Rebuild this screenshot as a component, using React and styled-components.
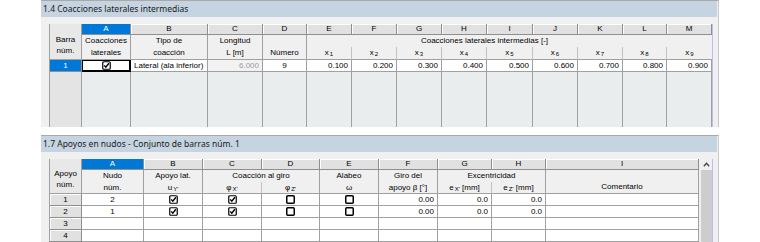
import React from "react";
import styled, { createGlobalStyle } from "styled-components";

const GlobalStyle = createGlobalStyle`
  html, body { margin: 0; padding: 0; background: #fff; }
  body { font-family: "Liberation Sans", Arial, sans-serif; color: #000; }
  * { box-sizing: border-box; }
`;

const Page = styled.div`
  width: 678px;
  margin-left: 41px;
  display: flex;
  flex-direction: column;
  gap: 8px;
`;

const Panel = styled.section`
  height: ${p => p.$h}px;
  background: #f0f0f0;
  border-top: 1px solid #a9a9a9;
  border-right: 1px solid #c9c9c9;
  display: flex;
  flex-direction: column;
  overflow: hidden;
`;

const TitleBar = styled.div`
  flex: 0 0 16px;
  margin-right: 1px;
  padding-left: 2px;
  background: #c5d4e0;
  font-family: "Noto Sans", "Open Sans", sans-serif;
  font-size: 8.5px;
  line-height: 16px;
  color: #1a1a1a;
  white-space: nowrap;
`;

const Body = styled.div`
  flex: 1;
  min-height: 0;
  display: flex;
  margin: 7px 5px 0 8px;
  border-left: 1px solid #a0a0a0;
  border-right: 1px solid #bcbcf0;
`;

const Grid = styled.div`
  flex: ${p => (p.$grow ? 1 : "none")};
  height: 100%;
  display: grid;
  grid-template-columns: ${p => p.$cols};
  grid-template-rows: ${p => p.$rows};
  font-size: 8px;
  line-height: 11px;
`;

const Letter = styled.div`
  grid-row: 1;
  grid-column: ${p => p.$c};
  background: ${p => (p.$active ? "#0078d7" : "#e1e1e1")};
  color: ${p => (p.$active ? "#fff" : "#000")};
  border-right: 1px solid #8f8f8f;
  border-bottom: 1px solid #8f8f8f;
  box-shadow: ${p => (p.$active ? "none" : "inset 1px 1px 0 #fdfdfd")};
  text-align: center;
  line-height: 10px;
`;

const Corner = styled.div`
  grid-row: 1 / span 3;
  grid-column: 1;
  background: #e8e8e8;
  border-right: 1px solid #a0a0a0;
  border-bottom: 1px solid #a0a0a0;
  display: flex;
  flex-direction: column;
  justify-content: center;
  align-items: center;
  padding-top: 6px;
`;

const Head = styled.div`
  grid-row: ${p => p.$r};
  grid-column: ${p => p.$c};
  background: #f0f0f0;
  border-right: ${p =>
    p.$line === "full" ? "1px solid #a0a0a0" : p.$line === "soft" ? "1px solid #c2c2c2" : "none"};
  border-bottom: ${p => (p.$bottom ? "1px solid #a0a0a0" : "none")};
  display: flex;
  flex-direction: column;
  justify-content: ${p => (p.$end ? "flex-end" : "center")};
  align-items: center;
  padding-right: ${p => p.$shift || 0}px;
  white-space: nowrap;
`;

const HeadLine = styled.div`
  height: 12px;
  line-height: 12px;
`;

const Sub = styled.span`
  font-size: 6px;
  position: relative;
  top: 1px;
  margin-left: 1px;
`;

const RowHead = styled.div`
  grid-column: 1;
  background: ${p => (p.$active ? "#0078d7" : "#e1e1e1")};
  color: ${p => (p.$active ? "#fff" : "#000")};
  border-right: 1px solid #8f8f8f;
  border-bottom: 1px solid #8f8f8f;
  box-shadow: ${p => (p.$active ? "none" : "inset 1px 1px 0 #fdfdfd")};
  text-align: center;
`;

const Cell = styled.div`
  background: ${p => (p.$muted ? "#f2f2f2" : "#fff")};
  color: ${p => (p.$muted ? "#9a9a9a" : "#000")};
  border-right: 1px solid #a0a0a0;
  border-bottom: 1px solid #a0a0a0;
  box-shadow: ${p => (p.$focus ? "inset 0 0 0 1px #000" : "none")};
  ${p => p.$focus && "border-color: #000;"}
  display: flex;
  align-items: center;
  justify-content: ${p =>
    p.$align === "right" ? "flex-end" : p.$align === "left" ? "flex-start" : "center"};
  padding: 0 3px;
  white-space: nowrap;
  overflow: hidden;
`;

const Fill = styled.div`
  background: ${p => (p.$side ? "#e4e4e4" : "#e9eded")};
  border-right: 1px solid #a0a0a0;
`;

const ScrollBar = styled.div`
  width: 13px;
  padding-left: 2px;
  display: flex;
  flex-direction: column;
  background: #f0f0f0;
`;

const ScrollUp = styled.div`
  height: 11px;
  display: flex;
  align-items: center;
  justify-content: center;
`;

const Thumb = styled.div`
  flex: 1;
  background: #cdcdcd;
`;

const Check = ({ on }) => (
  <svg width="9" height="9" viewBox="0 0 9 9">
    <rect
      x="0.75"
      y="0.75"
      width="7.5"
      height="7.5"
      rx="1"
      fill="#fff"
      stroke="#000"
      strokeWidth={on ? 1.2 : 1.5}
    />
    {on && <path d="M2.2 4.4 L3.8 6.2 L6.9 2.2" fill="none" stroke="#000" strokeWidth="1.4" />}
  </svg>
);

const letters = "ABCDEFGHIJKLM".split("");

const cols1 = [32, 49, 77, 55, 44, 45, 45, 45, 45, 46, 45, 45, 44, 45];
const xs = ["0.100", "0.200", "0.300", "0.400", "0.500", "0.600", "0.700", "0.800", "0.900"];

const cols2 = [32, 62, 59, 59, 58, 59, 59, 54, 54, 153];
const supports = [
  { n: "1", nudo: "2", checks: [true, true, false, false], beta: "0.00", ex: "0.0", ez: "0.0" },
  { n: "2", nudo: "1", checks: [true, true, false, false], beta: "0.00", ex: "0.0", ez: "0.0" },
  { n: "3" },
  { n: "4" },
];

const LateralTable = () => (
  <Grid $cols={cols1.map(w => w + "px").join(" ")} $rows="11px 12px 13px 12px 1fr">
    <Corner>
      <div>Barra</div>
      <div>núm.</div>
    </Corner>
    {cols1.slice(1).map((_, i) => (
      <Letter key={i} $c={i + 2} $active={i === 0}>
        {letters[i]}
      </Letter>
    ))}
    <Head $r="2 / span 2" $c={2} $line="full" $bottom>
      <HeadLine>Coacciones</HeadLine>
      <HeadLine>laterales</HeadLine>
    </Head>
    <Head $r="2 / span 2" $c={3} $line="full" $bottom>
      <HeadLine>Tipo de</HeadLine>
      <HeadLine>coacción</HeadLine>
    </Head>
    <Head $r="2 / span 2" $c={4} $line="full" $bottom>
      <HeadLine>Longitud</HeadLine>
      <HeadLine>L [m]</HeadLine>
    </Head>
    <Head $r="2 / span 2" $c={5} $line="full" $bottom $end>
      <HeadLine>Número</HeadLine>
    </Head>
    <Head $r={2} $c="6 / 15" $shift={50}>
      <HeadLine>Coacciones laterales intermedias [-]</HeadLine>
    </Head>
    {xs.map((_, i) => (
      <Head key={i} $r={3} $c={i + 6} $line={i < 8 ? "soft" : "none"} $bottom>
        <HeadLine>
          x<Sub>{i + 1}</Sub>
        </HeadLine>
      </Head>
    ))}

    <RowHead $active>1</RowHead>
    <Cell $focus>
      <Check on />
    </Cell>
    <Cell $align="left">Lateral (ala inferior)</Cell>
    <Cell $align="right" $muted>
      6.000
    </Cell>
    <Cell>9</Cell>
    {xs.map(v => (
      <Cell key={v} $align="right">
        {v}
      </Cell>
    ))}

    {cols1.map((_, i) => (
      <Fill key={i} $side={i === 0} />
    ))}
  </Grid>
);

const SupportTable = () => (
  <Grid $grow $cols={cols2.map(w => w + "px").join(" ")} $rows="11px 12px 12px repeat(4, 12px)">
    <Corner>
      <div>Apoyo</div>
      <div>núm.</div>
    </Corner>
    {cols2.slice(1).map((_, i) => (
      <Letter key={i} $c={i + 2} $active={i === 0}>
        {letters[i]}
      </Letter>
    ))}
    <Head $r="2 / span 2" $c={2} $line="full" $bottom>
      <HeadLine>Nudo</HeadLine>
      <HeadLine>núm.</HeadLine>
    </Head>
    <Head $r="2 / span 2" $c={3} $line="full" $bottom>
      <HeadLine>Apoyo lat.</HeadLine>
      <HeadLine>
        u<Sub>Y'</Sub>
      </HeadLine>
    </Head>
    <Head $r={2} $c="4 / 6" $line="full">
      <HeadLine>Coacción al giro</HeadLine>
    </Head>
    <Head $r={3} $c={4} $line="soft" $bottom>
      <HeadLine>
        φ<Sub>X'</Sub>
      </HeadLine>
    </Head>
    <Head $r={3} $c={5} $line="full" $bottom>
      <HeadLine>
        φ<Sub>Z'</Sub>
      </HeadLine>
    </Head>
    <Head $r="2 / span 2" $c={6} $line="full" $bottom>
      <HeadLine>Alabeo</HeadLine>
      <HeadLine>ω</HeadLine>
    </Head>
    <Head $r="2 / span 2" $c={7} $line="full" $bottom>
      <HeadLine>Giro del</HeadLine>
      <HeadLine>apoyo β [°]</HeadLine>
    </Head>
    <Head $r={2} $c="8 / 10" $line="full">
      <HeadLine>Excentricidad</HeadLine>
    </Head>
    <Head $r={3} $c={8} $line="soft" $bottom>
      <HeadLine>
        e<Sub>X'</Sub> [mm]
      </HeadLine>
    </Head>
    <Head $r={3} $c={9} $line="full" $bottom>
      <HeadLine>
        e<Sub>Z'</Sub> [mm]
      </HeadLine>
    </Head>
    <Head $r="2 / span 2" $c={10} $line="full" $bottom $end>
      <HeadLine>Comentario</HeadLine>
    </Head>

    {supports.map(s => (
      <React.Fragment key={s.n}>
        <RowHead>{s.n}</RowHead>
        <Cell>{s.nudo}</Cell>
        {[0, 1, 2, 3].map(k => (
          <Cell key={k}>{s.checks && <Check on={s.checks[k]} />}</Cell>
        ))}
        <Cell $align="right">{s.beta}</Cell>
        <Cell $align="right">{s.ex}</Cell>
        <Cell $align="right">{s.ez}</Cell>
        <Cell $align="left" />
      </React.Fragment>
    ))}
  </Grid>
);

export default function App() {
  return (
    <>
      <GlobalStyle />
      <Page>
        <Panel $h={127}>
          <TitleBar>1.4 Coacciones laterales intermedias</TitleBar>
          <Body>
            <LateralTable />
          </Body>
        </Panel>
        <Panel $h={108}>
          <TitleBar>1.7 Apoyos en nudos - Conjunto de barras núm. 1</TitleBar>
          <Body>
            <SupportTable />
            <ScrollBar>
              <ScrollUp>
                <svg width="7" height="5" viewBox="0 0 7 5">
                  <path d="M0.8 4.2 L3.5 1.3 L6.2 4.2" fill="none" stroke="#444" strokeWidth="1.3" />
                </svg>
              </ScrollUp>
              <Thumb />
            </ScrollBar>
          </Body>
        </Panel>
      </Page>
    </>
  );
}
